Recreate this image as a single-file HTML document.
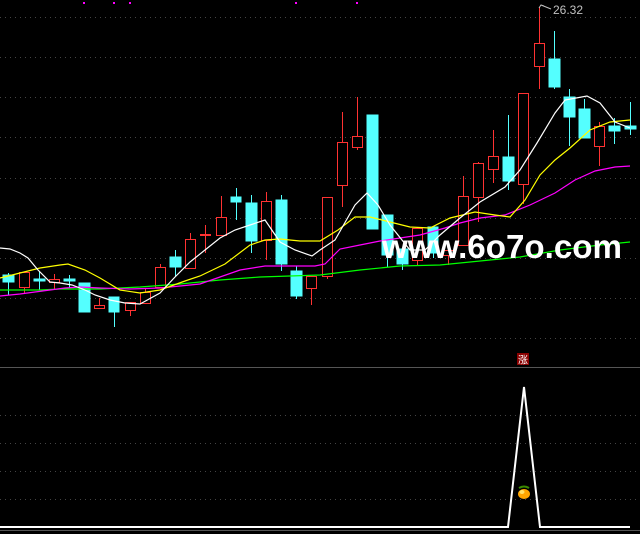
<!DOCTYPE html>
<html><head><meta charset="utf-8"><style>
html,body{margin:0;padding:0;background:#000;width:640px;height:534px;overflow:hidden}
svg{display:block}
</style></head><body>
<svg width="640" height="534" viewBox="0 0 640 534" xmlns="http://www.w3.org/2000/svg" shape-rendering="crispEdges">
<rect width="640" height="534" fill="#000"/>
<g stroke="#444" stroke-width="1" stroke-dasharray="1,4">
<line x1="0" y1="17.5" x2="640" y2="17.5"/><line x1="0" y1="57.5" x2="640" y2="57.5"/><line x1="0" y1="97.5" x2="640" y2="97.5"/><line x1="0" y1="137.5" x2="640" y2="137.5"/><line x1="0" y1="178.5" x2="640" y2="178.5"/><line x1="0" y1="218.5" x2="640" y2="218.5"/><line x1="0" y1="258.5" x2="640" y2="258.5"/><line x1="0" y1="298.5" x2="640" y2="298.5"/><line x1="0" y1="338.5" x2="640" y2="338.5"/>
<line x1="0" y1="415.5" x2="640" y2="415.5"/><line x1="0" y1="443.5" x2="640" y2="443.5"/><line x1="0" y1="471.5" x2="640" y2="471.5"/><line x1="0" y1="499.5" x2="640" y2="499.5"/>
</g>
<line x1="0" y1="367.5" x2="640" y2="367.5" stroke="#555"/>
<line x1="0" y1="530.5" x2="640" y2="530.5" stroke="#555"/>
<g fill="#ff00ff"><rect x="83" y="2" width="2" height="2"/><rect x="113" y="2" width="2" height="2"/><rect x="129" y="2" width="2" height="2"/><rect x="295" y="2" width="2" height="2"/><rect x="356" y="2" width="2" height="2"/></g>
<!-- cyan candles -->
<g stroke="#54ffff" fill="#54ffff">
<line x1="8.5" y1="273" x2="8.5" y2="295"/><rect x="3" y="275" width="11" height="7"/>
<line x1="39.5" y1="272" x2="39.5" y2="290"/><rect x="34" y="279" width="11" height="2"/>
<line x1="69.5" y1="275" x2="69.5" y2="288"/><rect x="64" y="279" width="11" height="2"/>
<rect x="79" y="283" width="11" height="29"/>
<line x1="114.5" y1="297" x2="114.5" y2="327"/><rect x="109" y="297" width="10" height="15"/>
<line x1="175.5" y1="250" x2="175.5" y2="277"/><rect x="170" y="257" width="11" height="10"/>
<line x1="236.5" y1="188" x2="236.5" y2="220"/><rect x="231" y="197" width="10" height="5"/>
<line x1="251.5" y1="195" x2="251.5" y2="253"/><rect x="246" y="203" width="11" height="38"/>
<line x1="281.5" y1="195" x2="281.5" y2="271"/><rect x="276" y="200" width="11" height="64"/>
<line x1="296.5" y1="266" x2="296.5" y2="299"/><rect x="291" y="271" width="11" height="25"/>
<rect x="367" y="115" width="11" height="114"/>
<line x1="387.5" y1="215" x2="387.5" y2="267"/><rect x="382" y="215" width="11" height="40"/>
<line x1="402.5" y1="249" x2="402.5" y2="270"/><rect x="397" y="249" width="11" height="15"/>
<line x1="433.5" y1="227" x2="433.5" y2="258"/><rect x="428" y="227" width="10" height="26"/>
<line x1="508.5" y1="115" x2="508.5" y2="190"/><rect x="503" y="157" width="11" height="24"/>
<line x1="554.5" y1="31" x2="554.5" y2="89"/><rect x="549" y="59" width="11" height="28"/>
<line x1="569.5" y1="89" x2="569.5" y2="146"/><rect x="564" y="97" width="11" height="20"/>
<line x1="584.5" y1="99" x2="584.5" y2="138"/><rect x="579" y="109" width="11" height="29"/>
<line x1="614.5" y1="118" x2="614.5" y2="144"/><rect x="609" y="126" width="11" height="5"/>
<line x1="630.5" y1="102" x2="630.5" y2="135"/><rect x="625" y="126" width="11" height="3"/>
</g>
<!-- red candles -->
<g stroke="#ff3232" fill="#000" stroke-width="1">
<line x1="24.5" y1="287" x2="24.5" y2="293"/><rect x="19.5" y="272.5" width="10" height="15"/>
<line x1="54.5" y1="274" x2="54.5" y2="289"/><rect x="49.5" y="279.5" width="10" height="3"/>
<line x1="99.5" y1="298" x2="99.5" y2="305"/><rect x="94.5" y="305.5" width="10" height="3"/>
<line x1="130.5" y1="310" x2="130.5" y2="316"/><rect x="125.5" y="302.5" width="10" height="8"/>
<line x1="145.5" y1="288" x2="145.5" y2="292"/><rect x="140.5" y="292.5" width="10" height="11"/>
<line x1="160.5" y1="264" x2="160.5" y2="267"/><rect x="155.5" y="267.5" width="10" height="20"/>
<line x1="190.5" y1="233" x2="190.5" y2="239"/><rect x="185.5" y="239.5" width="10" height="29"/>
<line x1="205.5" y1="225" x2="205.5" y2="253"/><rect x="200.5" y="234.5" width="10" height="1"/>
<line x1="221.5" y1="196" x2="221.5" y2="217"/><rect x="216.5" y="217.5" width="10" height="18"/>
<line x1="266.5" y1="192" x2="266.5" y2="260"/><rect x="261.5" y="201.5" width="10" height="39"/>
<line x1="311.5" y1="288" x2="311.5" y2="305"/><rect x="306.5" y="276.5" width="10" height="12"/>
<line x1="327.5" y1="276" x2="327.5" y2="279"/><rect x="322.5" y="197.5" width="10" height="79"/>
<line x1="342.5" y1="112" x2="342.5" y2="207"/><rect x="337.5" y="142.5" width="10" height="43"/>
<line x1="357.5" y1="97" x2="357.5" y2="150"/><rect x="352.5" y="136.5" width="10" height="11"/>
<line x1="417.5" y1="260" x2="417.5" y2="265"/><rect x="412.5" y="228.5" width="10" height="32"/>
<line x1="448.5" y1="255" x2="448.5" y2="265"/><rect x="443.5" y="250.5" width="10" height="5"/>
<line x1="463.5" y1="176" x2="463.5" y2="245"/><rect x="458.5" y="196.5" width="10" height="49"/>
<line x1="478.5" y1="162" x2="478.5" y2="222"/><rect x="473.5" y="163.5" width="10" height="34"/>
<line x1="493.5" y1="130" x2="493.5" y2="183"/><rect x="488.5" y="156.5" width="10" height="13"/>
<line x1="523.5" y1="184" x2="523.5" y2="204"/><rect x="518.5" y="93.5" width="10" height="91"/>
<line x1="539.5" y1="7" x2="539.5" y2="89"/><rect x="534.5" y="43.5" width="10" height="23"/>
<line x1="599.5" y1="122" x2="599.5" y2="166"/><rect x="594.5" y="126.5" width="10" height="20"/>
</g>
<g fill="none" stroke-width="1.2" shape-rendering="auto">
<polyline stroke="#00ff00" points="0,290 40,290 60,289 100,289 140,287 180,284 220,280 260,277 290,276 320,275 360,270 400,266 440,265 480,261 520,257 560,250 600,245 630,242"/>
<polyline stroke="#ff00ff" points="0,296 20,294 50,290 65,288 80,287 100,288 130,289 160,288 200,284 240,270 265,266 290,266 315,266 325,264 340,249 360,245 380,241 400,238 420,235 445,228 460,223 480,218 505,215 530,205 555,193 575,180 595,171 615,167 630,166"/>
<polyline stroke="#ffff00" points="0,278 20,273 40,268 60,265 68,264 85,270 100,278 120,290 140,293 160,290 185,281 200,276 225,264 250,245 265,240 280,239 300,241 320,241 338,230 355,217 370,217 390,222 410,227 430,228 450,218 475,212 495,215 510,217 525,200 540,175 555,160 570,148 590,130 610,122 630,120"/>
<polyline stroke="#ffffff" points="0,248 10,249 20,253 28,258 38,270 50,282 60,283 72,285 85,290 95,295 110,300 125,303 140,304 160,293 175,277 190,262 205,250 220,238 235,230 250,225 265,220 280,242 295,250 312,256 320,250 335,240 355,205 367,193 378,205 390,225 410,250 425,250 440,235 460,218 480,202 505,187 520,170 537,143 555,113 565,100 587,96 600,103 615,122 630,128"/>
</g>
<g shape-rendering="auto">
<path d="M539 8 L541 5 L544 6 M541 5 L551 9" stroke="#c0c0c0" fill="none"/>
<text x="553" y="14" fill="#c0c0c0" font-family="Liberation Sans, sans-serif" font-size="12">26.32</text>
<text x="382" y="258" fill="#ffffff" font-family="Liberation Sans, sans-serif" font-weight="bold" font-size="33" textLength="240" lengthAdjust="spacingAndGlyphs">www.6o7o.com</text>
<polyline points="0,527 508,527 524,387 540,527 630,527" stroke="#fff" stroke-width="2" fill="none"/>
<rect x="517" y="353" width="12" height="12" fill="#8b0000"/>
<text x="523" y="363.5" fill="#fff" font-family="Noto Sans CJK SC, sans-serif" font-size="10" text-anchor="middle">涨</text>
<ellipse cx="524" cy="494" rx="6" ry="5" fill="#ffa500"/>
<ellipse cx="522" cy="492" rx="2.5" ry="2" fill="#ffe066"/>
<path d="M519 488 Q524 485 529 488" stroke="#3a8a00" stroke-width="2" fill="none"/>
</g>
</svg>
</body></html>
